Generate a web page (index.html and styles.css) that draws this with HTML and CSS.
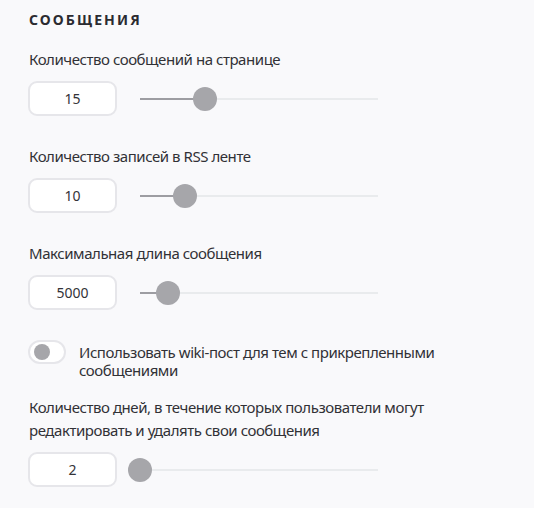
FILE: index.html
```html
<!DOCTYPE html>
<html lang="ru">
<head>
<meta charset="utf-8">
<link rel="stylesheet" href="styles.css">
</head>
<body>
<div class="page">
  <h2 class="title">СООБЩЕНИЯ</h2>

  <div class="field">
    <div class="label">Количество сообщений на странице</div>
    <div class="row">
      <div class="num">15</div>
      <div class="slider"><div class="fill" style="width:65px"></div><div class="thumb" style="left:65px"></div></div>
    </div>
  </div>

  <div class="field">
    <div class="label">Количество записей в RSS ленте</div>
    <div class="row">
      <div class="num">10</div>
      <div class="slider"><div class="fill" style="width:45px"></div><div class="thumb" style="left:45px"></div></div>
    </div>
  </div>

  <div class="field">
    <div class="label">Максимальная длина сообщения</div>
    <div class="row">
      <div class="num">5000</div>
      <div class="slider"><div class="fill" style="width:28px"></div><div class="thumb" style="left:28px"></div></div>
    </div>
  </div>

  <div class="toggle-field">
    <div class="toggle"><div class="knob"></div></div>
    <div class="toggle-text">Использовать wiki-пост для тем с прикрепленными сообщениями</div>
  </div>

  <div class="field last">
    <div class="label multi">Количество дней, в течение которых пользователи могут редактировать и удалять свои сообщения</div>
    <div class="row">
      <div class="num">2</div>
      <div class="slider"><div class="fill" style="width:0px"></div><div class="thumb" style="left:0px"></div></div>
    </div>
  </div>
</div>
</body>
</html>
```
FILE: styles.css
```css
html, body {
  margin: 0;
  padding: 0;
  background: #f9f9fb;
}
body {
  font-family: "Noto Sans", "Open Sans", sans-serif;
  color: #313136;
  font-size: 15px;
  letter-spacing: -0.45px;
}
.page {
  padding: 10px 28px 0 28px;
  width: 460px;
}
.title {
  margin: 0 0 0 1px;
  font-size: 14px;
  font-weight: 700;
  letter-spacing: 2.1px;
  line-height: 20px;
  color: #2b2b30;
}
.field {
  margin-top: 17px;
}
.field + .field {
  margin-top: 28px;
}
.label {
  line-height: 24px;
  padding-left: 1px;
}
.label.multi {
  width: 420px;
  line-height: 23px;
}
.row {
  display: flex;
  align-items: center;
  margin-top: 10px;
}
.num {
  box-sizing: border-box;
  width: 89px;
  height: 35px;
  border: 2px solid #e6e6ea;
  border-radius: 9px;
  background: #ffffff;
  display: flex;
  align-items: center;
  justify-content: center;
  font-size: 14px;
  letter-spacing: 0;
  color: #333338;
}
.slider {
  position: relative;
  width: 238px;
  height: 24px;
  margin-left: 23px;
}
.slider::before {
  content: "";
  position: absolute;
  left: 0;
  right: 0;
  top: 11px;
  height: 2px;
  background: #e9ebed;
}
.fill {
  position: absolute;
  left: 0;
  top: 11px;
  height: 2px;
  background: #9d9da2;
}
.thumb {
  position: absolute;
  top: 0;
  width: 24px;
  height: 24px;
  margin-left: -12px;
  border-radius: 50%;
  background: #a6a6aa;
}
.toggle-field {
  display: flex;
  align-items: flex-start;
  margin-top: 30px;
}
.toggle {
  box-sizing: border-box;
  flex: none;
  width: 38px;
  height: 24px;
  border: 2px solid #e6e6ea;
  border-radius: 12px;
  background: #ffffff;
  display: flex;
  align-items: center;
  padding-left: 4px;
}
.knob {
  width: 16px;
  height: 16px;
  border-radius: 50%;
  background: #a6a6aa;
}
.toggle-text {
  margin-left: 13px;
  margin-top: 3px;
  line-height: 18px;
  width: 400px;
}
.field.last {
  margin-top: 17px;
}
```
